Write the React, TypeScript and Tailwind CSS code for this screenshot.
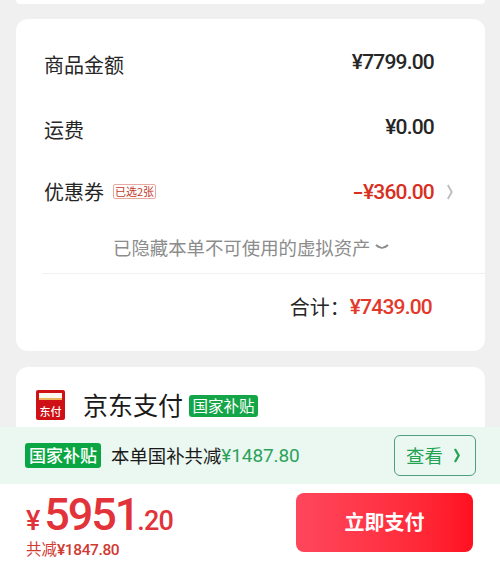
import type { ReactNode } from 'react';
import clsx from 'clsx';

const CJK = "font-['Noto_Sans_CJK_SC',sans-serif]";
const NUM = "font-['Roboto','Noto_Sans_CJK_SC',sans-serif]";

type RowProps = {
  label: string;
  amount: string;
  className?: string;
  amountClass?: string;
  negative?: boolean;
  tag?: ReactNode;
  arrow?: boolean;
};

function Chevron({ className }: { className?: string }) {
  return (
    <svg viewBox="0 0 8 16" fill="none" stroke="currentColor" className={className}>
      <path d="M1.8 1 L5.8 8 L1.8 15" />
    </svg>
  );
}

function PriceRow({ label, amount, className, amountClass, negative, tag, arrow }: RowProps) {
  return (
    <div className={clsx('flex items-center pl-7', arrow ? 'pr-[31px]' : 'pr-[51px]', className)}>
      <span className="text-[20px] leading-6 text-[#262626]">{label}</span>
      {tag}
      <span className={clsx('ml-auto text-[21px] leading-6 font-medium tracking-[-0.8px]', NUM, amountClass)}>
        {negative && <span className="mr-px inline-block origin-right scale-x-150">-</span>}
        {amount}
      </span>
      {arrow && <Chevron className="ml-3 h-4 w-2 stroke-[1.8] text-[#bcbcbc]" />}
    </div>
  );
}

function PayIcon() {
  return (
    <div className="flex h-[30px] w-[29px] flex-col items-center rounded-[2px] bg-[#cf1014] pt-[3px]">
      <div className="h-[7px] w-[23px] border-b-2 border-[#e9b45c] bg-[#fffaf0]" />
      <span className="mt-[5px] text-[11px] leading-[13px] font-medium text-white">东付</span>
    </div>
  );
}

export default function App() {
  return (
    <div className={clsx('flex h-[570px] w-[500px] flex-col overflow-hidden bg-[#f0f0f0]', CJK)}>
      <div className="mr-[15px] ml-4 h-1 shrink-0 rounded-b-xl bg-white" />

      <section className="mt-[15px] mr-[15px] ml-4 h-[332px] shrink-0 rounded-xl bg-white pt-[14px]">
        <PriceRow label="商品金额" amount="¥7799.00" className="h-16" amountClass="mb-[6px] text-[#262626]" />
        <PriceRow label="运费" amount="¥0.00" className="h-[66px]" amountClass="mb-[6px] text-[#262626]" />
        <PriceRow
          label="优惠券"
          amount="¥360.00"
          className="h-[59px] pb-[2px]"
          amountClass="text-[#d8301f]"
          negative
          arrow
          tag={
            <span className="ml-[9px] rounded-[2px] border border-[#e8aaa0] px-px text-[11px] leading-[13px] text-[#c4392b]">
              已选2张
            </span>
          }
        />
        <div className="flex h-[51px] items-center pb-px pl-[97px] text-[#8c8c8c]">
          <span className="text-[18.4px] leading-6">已隐藏本单不可使用的虚拟资产</span>
          <svg viewBox="0 0 14 8" fill="none" stroke="currentColor" className="ml-[5px] h-2 w-[14px] stroke-[1.8]">
            <path d="M1 2 Q3 4 7 5 Q11 4 13 2" />
          </svg>
        </div>
        <div className="ml-[26px] border-t border-[#f1f1f1]" />
        <div className="flex h-[66px] items-center justify-end pr-[53px]">
          <span className="text-[20px] leading-6 text-[#262626]">合计：</span>
          <span className={clsx('text-[21px] leading-6 font-medium tracking-[-0.8px] text-[#e2392b]', NUM)}>¥7439.00</span>
        </div>
      </section>

      <section className="mt-4 mr-[15px] ml-4 flex h-[60px] shrink-0 items-start rounded-t-xl bg-white pt-[23px] pl-5">
        <PayIcon />
        <span className="ml-[18px] text-[25px] leading-[29px] text-[#1a1a1a]">京东支付</span>
        <span className="mt-[5px] ml-[6px] flex h-[22px] w-[69px] items-center justify-center rounded-[3px] bg-[#14a549] pb-[2px] text-[15.5px] leading-5 text-white">
          国家补贴
        </span>
      </section>

      <div className="flex h-[57px] shrink-0 items-center bg-[#ebf7f1] pr-6 pl-[25px]">
        <span className="flex h-[25px] w-[76px] items-center justify-center rounded-[3px] bg-[#0ba644] pb-px text-[17px] leading-6 font-medium text-white">
          国家补贴
        </span>
        <span className="-mt-px ml-[10px] text-[18.4px] leading-6 text-[#1a1a1a]">本单国补共减</span>
        <span className={clsx('text-[19px] leading-6 tracking-[-0.1px] text-[#2ba35a]', NUM)}>¥1487.80</span>
        <button className="ml-auto flex h-[41px] w-[82px] items-center rounded-md border border-[#4f9f7c] pl-[11px] text-[#22a352]">
          <span className="-mt-px text-[18.4px] leading-6">查看</span>
          <Chevron className="ml-[10px] h-[15px] w-2 stroke-[2.4]" />
        </button>
      </div>

      <footer className="flex h-[86px] shrink-0 justify-between bg-white pr-[27px] pl-[26px]">
        <div className="flex flex-col pt-2">
          <div className={clsx('flex h-[46px] items-baseline font-medium text-[#e2323a]', NUM)}>
            <span className="text-[27px] leading-[46px]">¥</span>
            <span className="ml-1 text-[45px] leading-[46px] tracking-[-2.1px]">5951</span>
            <span className="-ml-px text-[27px] leading-[46px] tracking-[-0.8px]">.20</span>
          </div>
          <div className="flex items-baseline text-[15.5px] leading-5 text-[#cf3a32]">
            <span>共减</span>
            <span className={clsx('font-medium tracking-[-0.4px]', NUM)}>¥1847.80</span>
          </div>
        </div>
        <button className="mt-[9px] h-[59px] w-[177px] rounded-lg bg-linear-to-r from-[#ff465c] to-[#ff0f20] pb-[2px] text-[20px] font-bold text-white">
          立即支付
        </button>
      </footer>
    </div>
  );
}
